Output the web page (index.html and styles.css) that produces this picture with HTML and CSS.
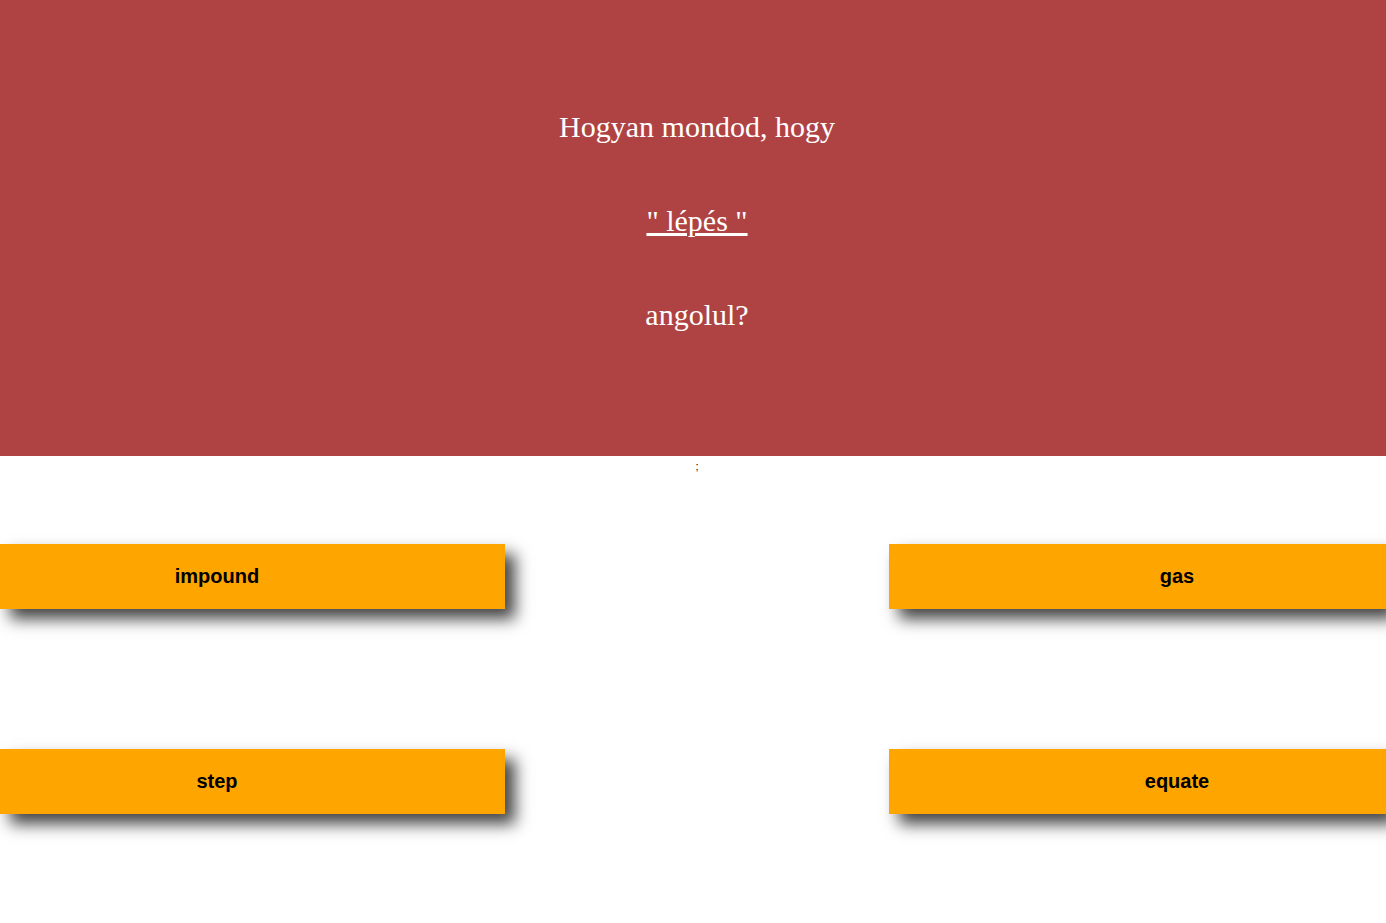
FILE: index.html
```html
<!DOCTYPE html>
<html lang="hu">
<head>
<meta charset="utf-8">
<title>Quiz</title>
<link rel="stylesheet" href="styles.css">
</head>
<body>
<header class="question">
  <p class="line">Hogyan mondod, hogy</p>
  <p class="line"><a class="word" href="#">" lépés "</a></p>
  <p class="line">angolul?</p>
</header>
<div class="sep">;</div>
<main class="answers">
  <button class="answer answer-left">impound</button>
  <button class="answer answer-right">gas</button>
  <button class="answer answer-left">step</button>
  <button class="answer answer-right">equate</button>
</main>
</body>
</html>
```
FILE: styles.css
```css
html, body {
  margin: 0;
  padding: 0;
  background: #fff;
}
body {
  font-family: "Liberation Serif", "Times New Roman", serif;
  padding-bottom: 60px;
}
.question {
  background: #af4343;
  height: 456px;
  box-sizing: border-box;
  padding-top: 110px;
  padding-left: 8px;
  display: flex;
  flex-direction: column;
  align-items: center;
  gap: 60px;
  color: #fff;
}
.line {
  margin: 0;
  font-size: 30px;
  line-height: 34px;
}
.word {
  color: #fff;
  text-decoration: underline;
}
.sep {
  text-align: center;
  padding-left: 8px;
  font-size: 11px;
  line-height: 20px;
  color: #000;
  font-family: "Liberation Sans", Arial, sans-serif;
}
.answers {
  margin-top: 68px;
  display: grid;
  grid-template-columns: 505px 497px;
  justify-content: space-between;
  row-gap: 140px;
}
.answer {
  height: 65px;
  border: none;
  background: #ffa500;
  font-family: "Liberation Sans", Arial, sans-serif;
  font-weight: bold;
  font-size: 20px;
  color: #000;
  box-shadow: 10px 10px 15px #444;
  padding: 0;
}
.answer-left {
  padding-right: 71px;
}
.answer-right {
  padding-left: 79px;
}
```
